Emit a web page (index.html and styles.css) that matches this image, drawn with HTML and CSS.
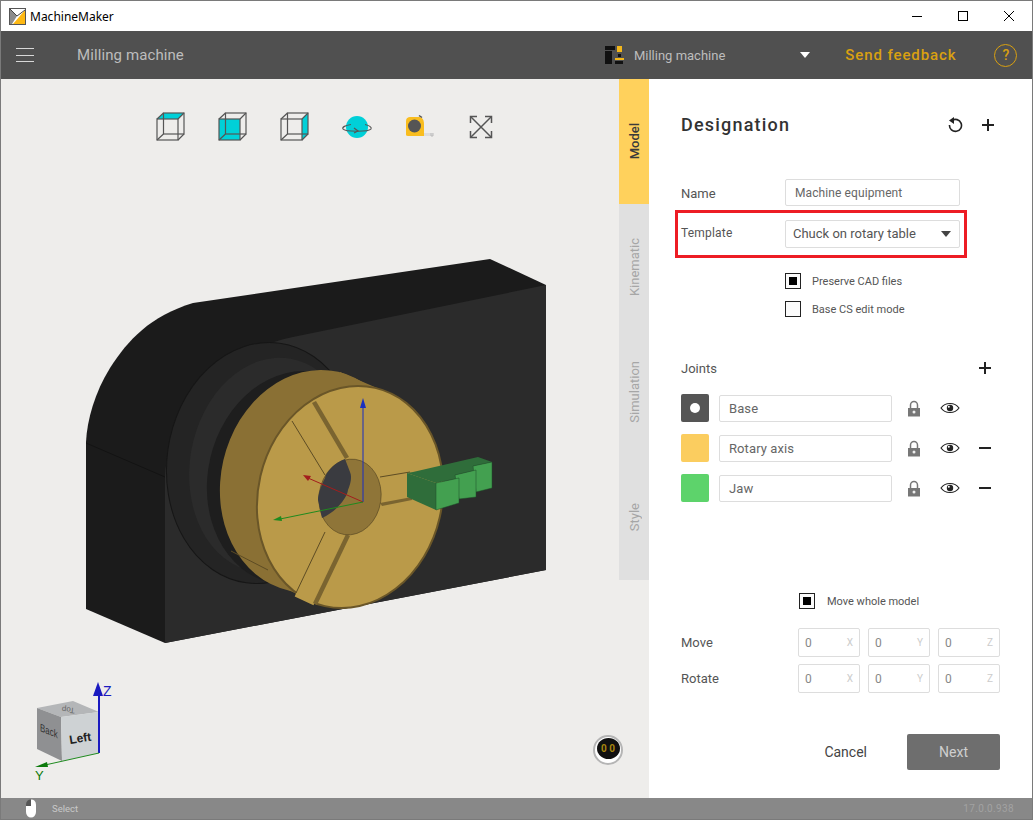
FILE: index.html
```html
<!DOCTYPE html>
<html lang="en">
<head>
<meta charset="utf-8">
<title>MachineMaker</title>
<link rel="stylesheet" href="styles.css">
</head>
<body>
<div class="window">
  <div class="titlebar">
    <svg class="app-logo" width="17" height="17" viewBox="0 0 17 17"><rect x=".5" y=".5" width="16" height="16" fill="#fff"/><path d="M1 1 L8 8 L3 16 L1 16 Z" fill="#8c8c8c"/><path d="M1 1 L16 1 L8.500 8 Z" fill="#fff"/><path d="M16 2 L16 16 L4 16 Z" fill="#fdb813"/><path d="M1 1 L8 8 L16 2" fill="none" stroke="#444"/><rect x=".5" y=".5" width="16" height="16" fill="none" stroke="#555"/></svg>
    <span class="app-name">MachineMaker</span>
    <div class="win-controls">
      <svg width="12" height="12" viewBox="0 0 12 12"><path d="M1 6.500H11" stroke="#000"/></svg>
      <svg width="12" height="12" viewBox="0 0 12 12"><rect x="1.500" y="1.500" width="9" height="9" fill="none" stroke="#000"/></svg>
      <svg width="12" height="12" viewBox="0 0 12 12"><path d="M1 1L11 11M11 1L1 11" stroke="#000"/></svg>
    </div>
  </div>

  <header class="appbar">
    <div class="hamburger"><i></i><i></i><i></i></div>
    <span class="app-title">Milling machine</span>
    <svg class="machine-icon" width="20" height="20" viewBox="0 0 20 20"><rect x="0" y="1" width="10" height="4" fill="#111"/><rect x="0" y="6" width="7" height="13" fill="#111"/><rect x="12" y="1" width="5" height="6" fill="#f2b61b"/><rect x="13" y="9" width="3" height="3" fill="#111"/><rect x="10" y="13" width="9" height="2" fill="#f2b61b"/><rect x="10" y="16" width="8" height="3" fill="#111"/></svg>
    <span class="machine-name">Milling machine</span>
    <span class="machine-arrow"></span>
    <span class="feedback">Send feedback</span>
    <span class="help">?</span>
  </header>

  <div class="main">
    <section class="viewport">
      <svg class="scene" width="618" height="719" viewBox="1 79 618 719">
        <!-- housing -->
        <path d="M86 609 L86 442 C87 420 95 392 110 368 C128 340 150 316 193 303 L490 259 L546 285 L546 570 L165 643 Z" fill="#1b1b1b"/>
        <path d="M546 285 L293 337 C250 345 205 375 185 415 C172 440 165 460 165 477 L165 643 L546 570 Z" fill="#2b2b2b"/>
        <path d="M86 443 L165 477" stroke="#131313" fill="none"/>
        <!-- flange rings -->
        <ellipse cx="263" cy="463" rx="96" ry="121" transform="rotate(8 263 463)" fill="#242424" stroke="#161616"/>
        <ellipse cx="272" cy="465" rx="82" ry="108" transform="rotate(10 272 465)" fill="#2b2b2b"/>
        <ellipse cx="296" cy="478" rx="88" ry="108" transform="rotate(13 296 478)" fill="#1e1e1e"/>
        <!-- chuck body -->
        <ellipse cx="313" cy="481" rx="92" ry="112" transform="rotate(13 313 481)" fill="#8a7034"/>
        <path d="M340 372 L377 388 L325 606 L288 590 Z" fill="#8a7034"/>
        <path d="M231 551 L268 570" stroke="#5d4c24" fill="none"/>
        <ellipse cx="350" cy="497" rx="92" ry="112" transform="rotate(13 350 497)" fill="#ba9a49" stroke="#6a5628" stroke-width="2"/>
        <!-- jaw slots -->
        <path d="M292 421 L312 403 L345 459 L325 475 Z" fill="#ba9a49" stroke="#ba9a49" stroke-width="2"/>
        <path d="M292 421 L325 475" stroke="#5d4c24" fill="none"/>
        <path d="M312 403 L345 459 L349 457 L316 401 Z" fill="#7a6430"/>
        <path d="M296 596 L325 532 L346 535 L313 604 Z" fill="#ba9a49" stroke="#ba9a49" stroke-width="2"/>
        <path d="M296 593 L325 532" stroke="#5d4c24" fill="none"/>
        <path d="M313 604 L346 535 L342 533 L309 602 Z" fill="#7a6430" transform="translate(4 1)"/>
        <path d="M380 477 L410 472 L412 498 L380 503 Z" fill="#ba9a49"/>
        <path d="M380 477 L410 472" stroke="#5d4c24" fill="none"/>
        <path d="M380 503 L412 497 L412 500 L382 506 Z" fill="#7a6430"/>
        <!-- bore -->
        <ellipse cx="350" cy="497" rx="31" ry="38" transform="rotate(8 350 497)" fill="#8f7538" stroke="#5d4c24" stroke-width=".7"/>
        <path d="M345 459 C335 462 326 472 325 478 C320 488 318 495 318 500 L322 518 C336 512 347 498 348 490 C351 483 352 476 350 472 Z" fill="#3a3b40"/>
        <!-- jaw block -->
        <path d="M407 473 L413 472 L478 457 L492 462 L473 466 L476 470 L455 475 L459 478 L436 483 Z" fill="#2f6d3a"/>
        <path d="M407 473 L436 483 L436 510 L407 497 Z" fill="#2f6d3a"/>
        <path d="M473 466 L492 462 L492 488 L476 492 Z" fill="#43a050" stroke="#1f4d28" stroke-width=".5"/>
        <path d="M455 475 L476 470 L476 497 L459 499 Z" fill="#43a050" stroke="#1f4d28" stroke-width=".5"/>
        <path d="M436 483 L459 478 L459 503 L436 510 Z" fill="#43a050" stroke="#1f4d28" stroke-width=".5"/>
        <!-- triad -->
        <path d="M363 502 L363 405" stroke="#1a2fc0" fill="none"/>
        <path d="M363 398 L366 408 L360 408 Z" fill="#1a2fc0"/>
        <path d="M363 502 L308 478" stroke="#a31d1d" fill="none"/>
        <path d="M303 475 L311 476 L308 481 Z" fill="#a31d1d"/>
        <path d="M363 502 L280 519" stroke="#1f8a1f" fill="none"/>
        <path d="M273 520 L281 516 L282 521 Z" fill="#1f8a1f"/>
        <!-- view cube -->
        <path d="M37 708 L73 701 L99 712 L61 717 Z" fill="#b4b6b8"/>
        <path d="M37 708 L61 717 L62 761 L37 749 Z" fill="#8f9092"/>
        <path d="M61 717 L99 712 L99 753 L62 761 Z" fill="#ced2d4"/>
        <text class="cube-left" transform="translate(70 744) rotate(-9)">Left</text>
        <text class="cube-back" transform="matrix(.72 .3 0 1 40 731)">Back</text>
        <text class="cube-top" transform="translate(75 708) rotate(186)">Top</text>
        <path d="M99 753 L99 692" stroke="#1a1ac0" stroke-width="2" fill="none"/>
        <path d="M98 682 L103 696 L93 696 Z" fill="#1a1ac0"/>
        <text class="axis-z" x="103" y="696">Z</text>
        <path d="M99 753 L45 765" stroke="#1f8a1f" fill="none"/>
        <path d="M35 767 L47 762 L48 767 Z" fill="#0c7a0c"/>
        <text class="axis-y" x="35" y="780">Y</text>
      </svg>

      <div class="view-tools">
        <svg width="32" height="32" viewBox="-2 -2 32 32"><path d="M0 6 L7 0 L27 0 L21 6 Z" fill="#00d0d8"/><g class="wire"><rect x="0" y="6" width="21" height="21"/><rect x="6.500" y="0" width="20.500" height="21"/><path d="M0 6L6.500 0M21 6L27 0M21 27L27 21M0 27L6.500 21"/></g></svg>
        <svg width="32" height="32" viewBox="-2 -2 32 32"><rect x="0" y="6" width="21" height="21" fill="#00d0d8"/><g class="wire"><rect x="0" y="6" width="21" height="21"/><rect x="6.500" y="0" width="20.500" height="21"/><path d="M0 6L6.500 0M21 6L27 0M21 27L27 21M0 27L6.500 21"/></g></svg>
        <svg width="32" height="32" viewBox="-2 -2 32 32"><path d="M21 6 L27 0 L27 21 L21 27 Z" fill="#00d0d8"/><g class="wire"><rect x="0" y="6" width="21" height="21"/><rect x="6.500" y="0" width="20.500" height="21"/><path d="M0 6L6.500 0M21 6L27 0M21 27L27 21M0 27L6.500 21"/></g></svg>
        <svg width="32" height="32" viewBox="0 0 32 32"><circle cx="16" cy="16" r="11" fill="#00d0d8"/><path d="M10 13.500 C4 14.500 1 16 2 18 C4 21 28 21 30 18 C31 16 28 14.500 24 13.500" fill="none" stroke="#555" stroke-width="1.200"/><path d="M13 17 L17 20 L13 22" fill="none" stroke="#555" stroke-width="1.200"/></svg>
        <svg width="32" height="32" viewBox="0 0 32 32"><rect x="21" y="22" width="9" height="3" fill="#ddd"/><path d="M28 22V25H30V22" fill="none" stroke="#bbb"/><path d="M3 10 C3 7 5 6 7 6 L16 6 C20 6 21 10 21 13 L21 25 L5 25 C3 25 3 24 3 23 Z" fill="#f9bd1f"/><circle cx="11.500" cy="15" r="6.500" fill="#555"/><path d="M16 4.500L19 6.500" stroke="#555" stroke-width="1.500"/></svg>
        <svg width="32" height="32" viewBox="0 0 32 32"><g fill="none" stroke="#555" stroke-width="1.500"><path d="M6 6L26 26M26 6L6 26"/><path d="M5.500 12V5.500H12M20 5.500H26.500V12M26.500 20V26.500H20M12 26.500H5.500V20"/></g></svg>
      </div>

      <div class="badge"><span>0 0</span></div>
    </section>

    <div class="tab-column">
      <nav class="tabs">
        <div class="tab active"><span>Model</span></div>
        <div class="tab"><span>Kinematic</span></div>
        <div class="tab"><span>Simulation</span></div>
        <div class="tab"><span>Style</span></div>
      </nav>
    </div>

    <aside class="panel">
      <div class="panel-head">
        <h1>Designation</h1>
        <svg class="undo" width="16" height="18" viewBox="0 0 16 18"><path d="M5 4.500 A6 6 0 1 1 2.500 9" fill="none" stroke="#222" stroke-width="1.600"/><path d="M7 1 L7 8 L2 4.500 Z" fill="#222"/></svg>
        <span class="plus"></span>
      </div>

      <div class="field name-row">
        <label class="lbl">Name</label>
        <div class="box name-box">Machine equipment</div>
      </div>
      <div class="field highlight">
        <label class="lbl small">Template</label>
        <div class="box select-box">Chuck on rotary table<span class="caret"></span></div>
      </div>

      <div class="checks">
        <div class="check"><span class="cb on"></span><span>Preserve CAD files</span></div>
        <div class="check"><span class="cb"></span><span>Base CS edit mode</span></div>
      </div>

      <div class="joints-head"><span class="lbl">Joints</span><span class="plus"></span></div>
      <div class="joints">
        <div class="joint"><span class="swatch base"></span><div class="box joint-box">Base</div>
          <svg class="lock" width="14" height="17" viewBox="0 0 14 17"><path d="M3.500 8V5A3.500 3.500 0 0 1 10.500 5V8" fill="none" stroke="#777" stroke-width="1.500"/><path d="M1 8H13V16.500H1Z" fill="#777"/><circle cx="7" cy="12" r="1.500" fill="#eee"/></svg>
          <svg class="eye" width="20" height="12" viewBox="0 0 20 12"><path d="M1 6 C5 0 15 0 19 6 C15 12 5 12 1 6Z" fill="#fff" stroke="#222" stroke-width="1.100"/><circle cx="10" cy="6" r="3.200" fill="#222"/><circle cx="8.800" cy="4.800" r="1" fill="#fff"/></svg>
          <span class="minus none"></span></div>
        <div class="joint"><span class="swatch yellow"></span><div class="box joint-box">Rotary axis</div>
          <svg class="lock" width="14" height="17" viewBox="0 0 14 17"><path d="M3.500 8V5A3.500 3.500 0 0 1 10.500 5V8" fill="none" stroke="#777" stroke-width="1.500"/><path d="M1 8H13V16.500H1Z" fill="#777"/><circle cx="7" cy="12" r="1.500" fill="#eee"/></svg>
          <svg class="eye" width="20" height="12" viewBox="0 0 20 12"><path d="M1 6 C5 0 15 0 19 6 C15 12 5 12 1 6Z" fill="#fff" stroke="#222" stroke-width="1.100"/><circle cx="10" cy="6" r="3.200" fill="#222"/><circle cx="8.800" cy="4.800" r="1" fill="#fff"/></svg>
          <span class="minus"></span></div>
        <div class="joint"><span class="swatch green"></span><div class="box joint-box">Jaw</div>
          <svg class="lock" width="14" height="17" viewBox="0 0 14 17"><path d="M3.500 8V5A3.500 3.500 0 0 1 10.500 5V8" fill="none" stroke="#777" stroke-width="1.500"/><path d="M1 8H13V16.500H1Z" fill="#777"/><circle cx="7" cy="12" r="1.500" fill="#eee"/></svg>
          <svg class="eye" width="20" height="12" viewBox="0 0 20 12"><path d="M1 6 C5 0 15 0 19 6 C15 12 5 12 1 6Z" fill="#fff" stroke="#222" stroke-width="1.100"/><circle cx="10" cy="6" r="3.200" fill="#222"/><circle cx="8.800" cy="4.800" r="1" fill="#fff"/></svg>
          <span class="minus"></span></div>
      </div>

      <div class="check whole"><span class="cb on"></span><span>Move whole model</span></div>

      <div class="coords">
        <div class="coord-row"><span class="lbl">Move</span>
          <div class="coord"><span>0</span><em>X</em></div><div class="coord"><span>0</span><em>Y</em></div><div class="coord"><span>0</span><em>Z</em></div></div>
        <div class="coord-row"><span class="lbl">Rotate</span>
          <div class="coord"><span>0</span><em>X</em></div><div class="coord"><span>0</span><em>Y</em></div><div class="coord"><span>0</span><em>Z</em></div></div>
      </div>

      <div class="actions">
        <span class="cancel">Cancel</span>
        <span class="next">Next</span>
      </div>
    </aside>
  </div>

  <footer class="status">
    <svg class="mouse" width="12" height="19" viewBox="0 0 12 19"><path d="M1 6V13A5 5.500 0 0 0 11 13V6Z" fill="#fff"/><path d="M1 7V5.500A5 5.500 0 0 1 6 .5V7Z" fill="#555"/><path d="M6 .5A5 5.500 0 0 1 11 5.500V7H6Z" fill="#fff"/></svg>
    <span class="select">Select</span>
    <span class="version">17.0.0.938</span>
  </footer>
</div>
</body>
</html>
```

FILE: styles.css
```css
* { box-sizing: border-box; }
html, body { margin: 0; padding: 0; }
body { font-family: Roboto, "Liberation Sans", sans-serif; background: #fff; }

.window {
  width: 1033px; height: 820px; display: flex; flex-direction: column;
  border: 1px solid #7a7a7a; overflow: hidden; background: #fff;
}

.titlebar { height: 30px; flex: none; display: flex; align-items: center; padding-left: 8px; background: #fff; }
.app-logo { flex: none; }
.app-name { margin-left: 4px; font: 12px "Noto Sans", sans-serif; color: #000; }
.win-controls { margin-left: auto; display: flex; gap: 34px; padding-right: 17px; }

.appbar { height: 48px; flex: none; display: flex; align-items: center; background: #505050; }
.hamburger { width: 18px; margin-left: 15px; display: flex; flex-direction: column; gap: 5.500px; }
.hamburger i { display: block; height: 1px; background: #d8d8d8; }
.app-title { margin-left: 43px; font-size: 15px; color: #bdbdbd; letter-spacing: .1px; }
.machine-icon { margin-left: 421px; flex: none; }
.machine-name { margin-left: 9px; font-size: 13px; color: #bdbdbd; }
.machine-arrow { margin-left: 75px; width: 0; height: 0; border-left: 5px solid transparent; border-right: 5px solid transparent; border-top: 6px solid #fff; }
.feedback { margin-left: 35px; font-size: 15px; font-weight: 500; color: #d9a010; letter-spacing: .9px; white-space: nowrap; }
.help { margin-left: 38px; width: 23px; height: 23px; flex: none; border: 1.500px solid #d9a010; border-radius: 50%; color: #d9a010; font-size: 14px; font-weight: 500; display: flex; align-items: center; justify-content: center; }

.main { flex: 1; min-height: 0; display: flex; }

.viewport { position: relative; width: 618px; flex: none; background: #eeedeb; }
.scene { position: absolute; left: 0; top: 0; }
.view-tools { position: relative; display: flex; justify-content: center; gap: 30px; padding-top: 32px; padding-left: 32px; }
.wire { fill: none; stroke: #555; stroke-width: 1.200; }
.badge { position: absolute; left: 592px; top: 656px; width: 30px; height: 30px; border-radius: 50%; background: #fff; border: 2px solid #b5b5b5; display: flex; align-items: flex-start; justify-content: center; }
.badge span { margin-top: 1px; width: 23px; height: 21px; border-radius: 50%; background: #111; color: #a8860f; font-size: 10px; font-weight: 700; text-align: center; line-height: 21px; }

.cube-left { font: 700 12px "Liberation Sans", sans-serif; fill: #222; }
.cube-back { font: 11px "Liberation Sans", sans-serif; fill: #333; }
.cube-top { font: 8px "Liberation Sans", sans-serif; fill: #666; }
.axis-z { font: 14px "Liberation Sans", sans-serif; fill: #1a1ac0; }
.axis-y { font: 13px "Liberation Sans", sans-serif; fill: #0c7a0c; }

.tab-column { width: 30px; flex: none; background: #eeedeb; }
.tabs { height: 501px; display: flex; flex-direction: column; background: #e0e0e0; }
.tab { flex: 1; display: flex; align-items: center; justify-content: center; color: #a6a6a6; font-size: 13px; }
.tab span { writing-mode: vertical-rl; transform: rotate(180deg); }
.tab.active { background: #ffd15c; color: #3b3b3b; font-weight: 500; }

.panel { flex: 1; min-width: 0; display: flex; flex-direction: column; padding: 32px 32px 0; background: #fff; }
.panel-head { height: 28px; display: flex; align-items: center; }
.panel-head h1 { margin: 0 0 2px; font-size: 18px; font-weight: 500; letter-spacing: 1.200px; color: #333; }
.undo { margin-left: auto; margin-right: 19px; }
.plus { width: 12px; height: 12px; flex: none; margin-right: 6px; background: linear-gradient(#222, #222) center / 100% 2px no-repeat, linear-gradient(#222, #222) center / 2px 100% no-repeat; }

.field { display: flex; align-items: center; }
.lbl { color: #555; font-size: 13px; }
.lbl.small { font-size: 12px; letter-spacing: .2px; margin-bottom: 1px; }
.name-row { margin-top: 40px; }
.name-row .lbl { width: 104px; padding-top: 1px; }
.box { height: 27px; border: 1px solid #ddd; border-radius: 2px; color: #666; font-size: 12px; display: flex; align-items: center; background: #fff; }
.name-box { width: 175px; padding-left: 9px; letter-spacing: .1px; }
.highlight { margin: 4px 0 0 -6px; width: 292px; height: 48px; border: 3px solid #ed1c24; padding-left: 3px; padding-bottom: 1px; }
.highlight .lbl { width: 104px; }
.select-box { width: 175px; height: 28px; padding: 0 8px 0 7px; font-size: 13px; color: #555; justify-content: space-between; }
.caret { width: 0; height: 0; border-left: 5px solid transparent; border-right: 5px solid transparent; border-top: 6px solid #444; }

.checks { margin: 15px 0 0 104px; display: flex; flex-direction: column; gap: 12px; }
.check { display: flex; align-items: center; gap: 11px; height: 16px; font-size: 11px; color: #555; }
.cb { width: 16px; height: 16px; flex: none; border: 1px solid #222; background: #fbfbfb; display: flex; align-items: center; justify-content: center; }
.cb.on::after { content: ""; width: 8px; height: 8px; background: #000; }

.joints-head { margin-top: 39px; height: 24px; display: flex; align-items: center; justify-content: space-between; }
.joints-head .plus { margin-right: 9px; }
.joints { margin-top: 14px; display: flex; flex-direction: column; gap: 12px; }
.joint { height: 28px; display: flex; align-items: center; }
.swatch { width: 28px; height: 28px; flex: none; border-radius: 2px; display: flex; align-items: center; justify-content: center; }
.swatch.base { background: #555; }
.swatch.base::after { content: ""; width: 10px; height: 10px; border-radius: 50%; background: #fff; }
.swatch.yellow { background: #fbcd5f; }
.swatch.green { background: #5dd36b; }
.joint-box { margin-left: 10px; width: 173px; padding-left: 9px; font-size: 13px; letter-spacing: .1px; }
.lock { margin-left: 15px; flex: none; }
.eye { margin-left: 19px; flex: none; }
.minus { margin-left: 19px; width: 12px; height: 2px; background: #222; flex: none; }
.minus.none { background: none; }

.whole { margin: 91px 0 0 118px; gap: 12px; }

.coords { margin-top: 19px; display: flex; flex-direction: column; gap: 7px; }
.coord-row { display: flex; align-items: center; gap: 8px; }
.coord-row .lbl { width: 109px; }
.coord { width: 62px; height: 29px; border: 1px solid #ddd; border-radius: 2px; display: flex; align-items: center; justify-content: space-between; padding: 0 6px; font-size: 12px; color: #888; }
.coord em { font-style: normal; font-size: 10px; color: #ccc; }

.actions { margin-top: 41px; display: flex; align-items: center; justify-content: flex-end; gap: 40px; }
.cancel { font-size: 14px; color: #444; }
.next { width: 93px; height: 36px; border-radius: 2px; background: #6e6e6e; color: #cfcfcf; font-size: 14px; display: flex; align-items: center; justify-content: center; }

.status { height: 21px; flex: none; display: flex; align-items: center; background: #888; }
.mouse { margin-left: 24px; flex: none; }
.select { margin-left: 15px; font-size: 9.500px; color: #c8c8c8; }
.version { margin-left: auto; margin-right: 18px; font-size: 10px; color: #a2a2a2; letter-spacing: .35px; }
```
